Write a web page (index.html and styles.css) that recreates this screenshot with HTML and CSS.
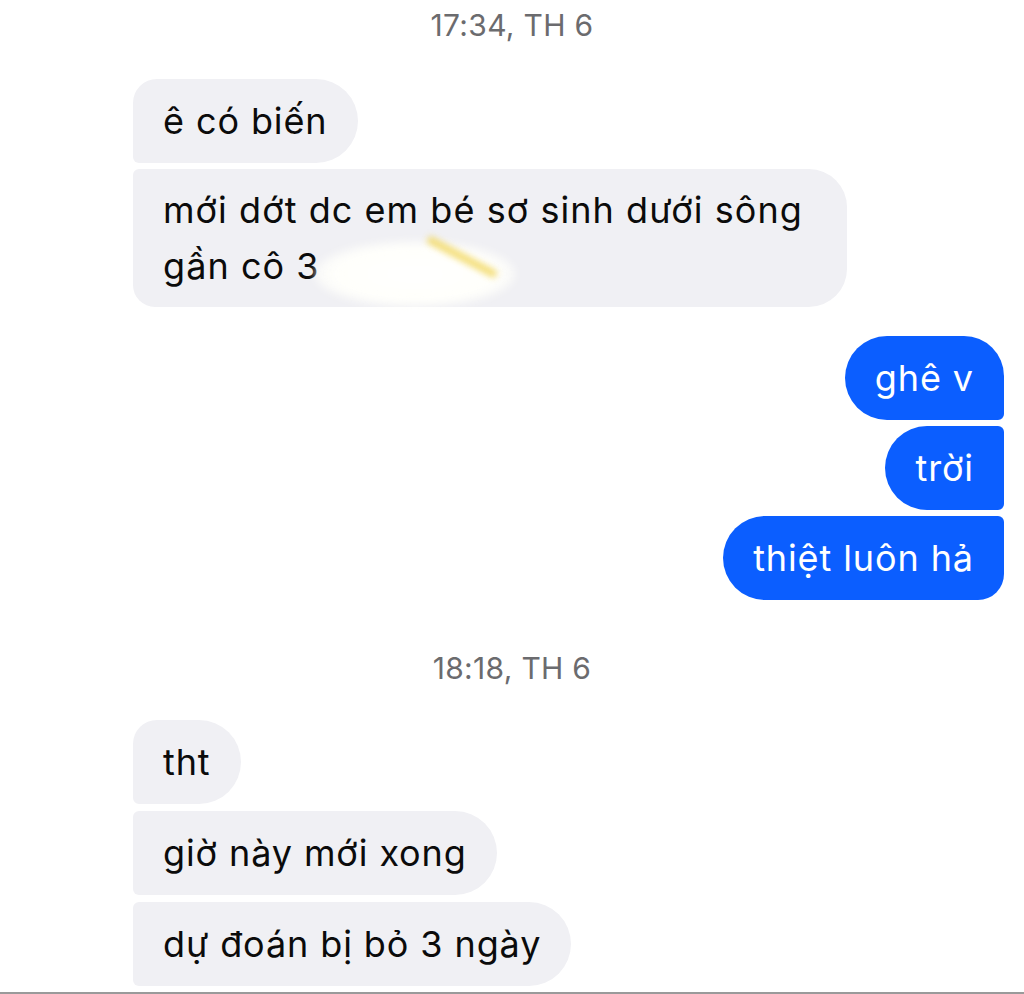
FILE: index.html
```html
<!DOCTYPE html>
<html lang="vi">
<head>
<meta charset="utf-8">
<title>Chat</title>
<link rel="stylesheet" href="styles.css">
</head>
<body>
<div class="chat">
  <div class="stamp stamp-first">17:34, TH 6</div>

  <div class="group in g1">
    <div class="bubble in-first">ê có biến</div>
    <div class="bubble in-last multi">mới dớt dc em bé sơ sinh dưới sông<br>gần cô 3
      <span class="smudge"></span><span class="streak"></span>
    </div>
  </div>

  <div class="group out g2">
    <div class="bubble out-first">ghê v</div>
    <div class="bubble out-mid">trời</div>
    <div class="bubble out-last">thiệt luôn hả</div>
  </div>

  <div class="stamp stamp-second">18:18, TH 6</div>

  <div class="group in g3">
    <div class="bubble in-first">tht</div>
    <div class="bubble in-mid">giờ này mới xong</div>
    <div class="bubble in-mid">dự đoán bị bỏ 3 ngày</div>
  </div>

  <div class="rule"></div>
</div>
</body>
</html>
```

FILE: styles.css
```css
html, body {
  margin: 0;
  padding: 0;
  background: #ffffff;
}

body {
  width: 1024px;
  height: 994px;
  overflow: hidden;
  font-family: Inter, "Noto Sans", "DejaVu Sans", sans-serif;
  -webkit-font-smoothing: antialiased;
}

.chat {
  display: flex;
  flex-direction: column;
  padding: 0 20px 0 133px;
}

.stamp {
  height: 50px;
  line-height: 50px;
  text-align: center;
  font-size: 30px;
  letter-spacing: 0.3px;
  color: #6b6b6e;
  margin-left: -133px;
  margin-right: -20px;
}

.stamp-second {
  margin-top: 43px;
}

.group {
  display: flex;
  flex-direction: column;
  gap: 6px;
}

.group.in { align-items: flex-start; }
.group.out { align-items: flex-end; }

.g1 { margin-top: 29px; }
.g2 { margin-top: 29px; }
.g3 { margin-top: 27px; gap: 7px; }

.bubble {
  position: relative;
  font-size: 36px;
  letter-spacing: 0.9px;
  line-height: 56px;
  padding: 14px 30px;
  border-radius: 42px;
  white-space: nowrap;
}

.group.in .bubble {
  background: #f0f0f4;
  color: #0b0b0b;
}

.group.out .bubble {
  background: #0b5eff;
  color: #ffffff;
}

.in-first {
  border-top-left-radius: 24px;
  border-bottom-left-radius: 6px;
}

.in-mid {
  border-top-left-radius: 6px;
  border-bottom-left-radius: 6px;
}

.in-last {
  border-top-left-radius: 6px;
  border-bottom-left-radius: 22px;
}

.multi {
  padding-top: 13px;
  padding-bottom: 13px;
  padding-right: 44px;
  letter-spacing: 1.05px;
  border-top-right-radius: 38px;
  border-bottom-right-radius: 38px;
}

.out-first {
  border-top-right-radius: 40px;
  border-bottom-right-radius: 6px;
}

.out-mid {
  border-top-right-radius: 6px;
  border-bottom-right-radius: 6px;
}

.out-last {
  border-top-right-radius: 6px;
  border-bottom-right-radius: 26px;
}

.smudge {
  position: absolute;
  left: 182px;
  top: 72px;
  width: 200px;
  height: 66px;
  border-radius: 50%;
  background: radial-gradient(ellipse at center, #ffffff 0%, #fffffb 55%, rgba(255,255,255,0) 100%);
  filter: blur(4px);
}

.streak {
  position: absolute;
  left: 290px;
  top: 84px;
  width: 78px;
  height: 8px;
  border-radius: 4px;
  background: #f2d860;
  transform: rotate(28deg);
  filter: blur(3px);
  opacity: 0.85;
}

.rule {
  margin-top: 6px;
  margin-left: -133px;
  margin-right: -20px;
  height: 2px;
  background: #9a9a9a;
}
```
